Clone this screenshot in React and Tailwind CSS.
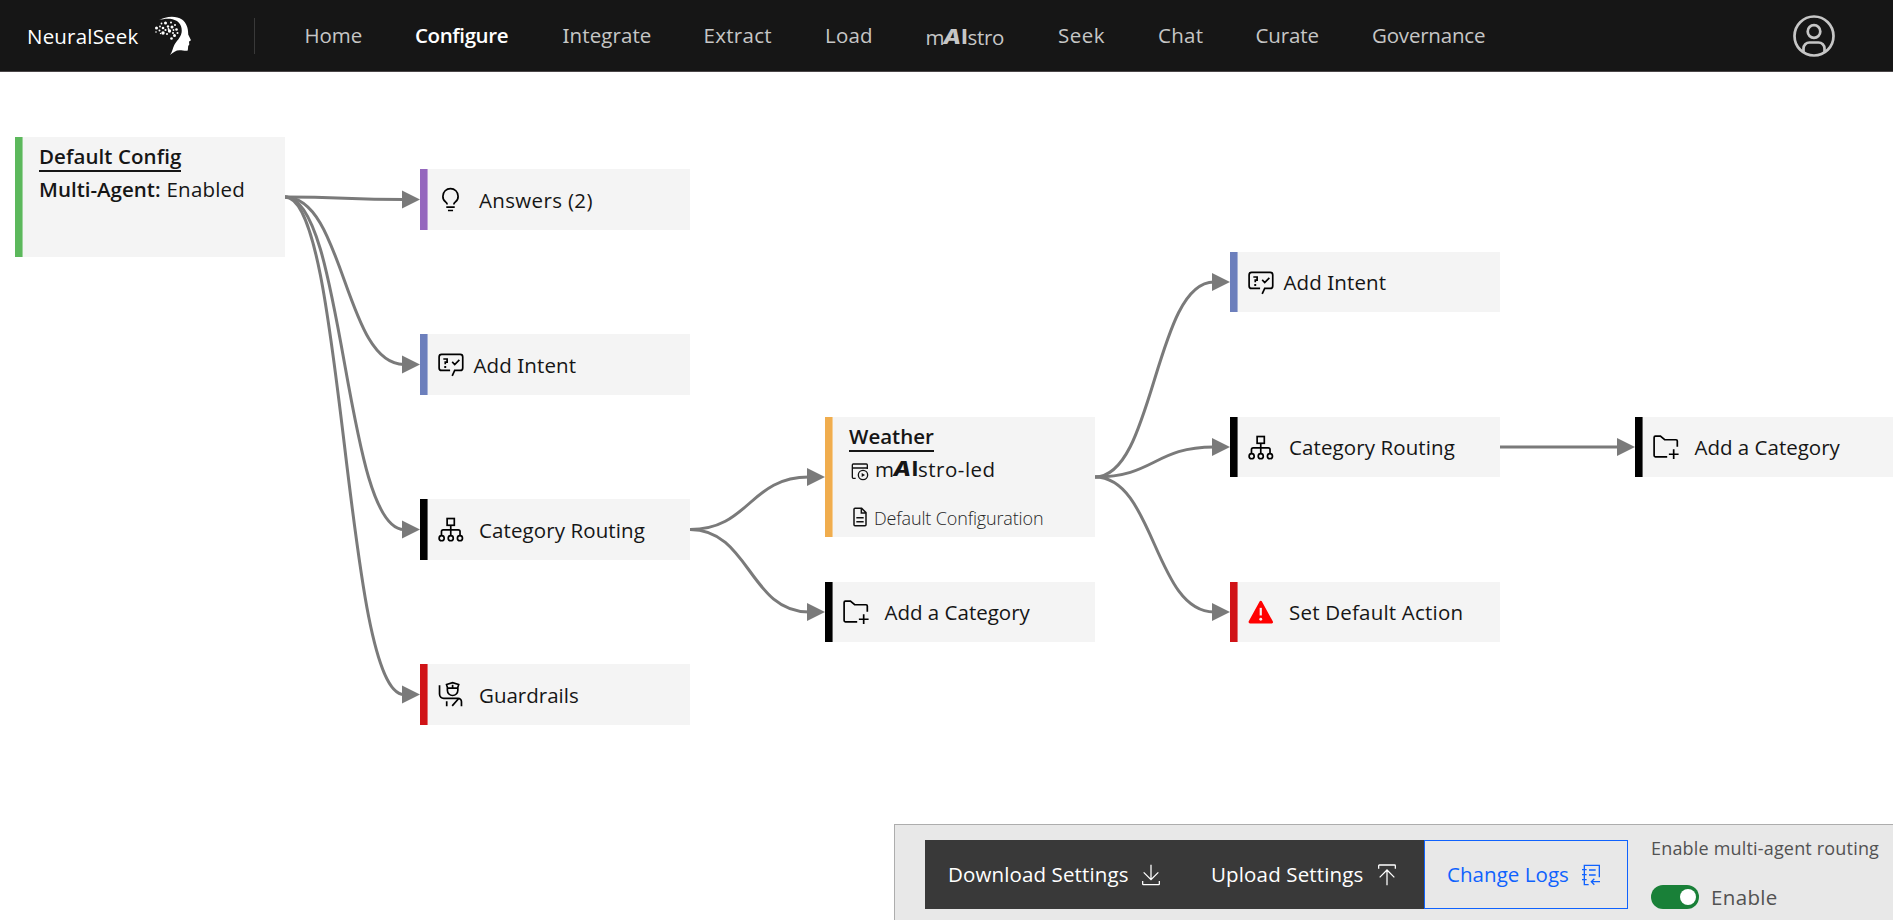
import React from "react";

const Serif = ({ children }) => <span className="font-['Noto_Sans',sans-serif]">{children}</span>;

const Ai = () => (
  <span className="inline-flex font-['Inter',sans-serif]">
    <span className="inline-block w-[19px] origin-left scale-x-115 font-extrabold italic tracking-normal">A</span>
    <span className="inline-block w-[6px] text-center font-extrabold tracking-normal">I</span>
  </span>
);

/* ---------- icons ---------- */

const Icon = ({ children }) => (
  <svg viewBox="0 0 32 32" className="size-[27px] shrink-0" fill="none" stroke="#000" strokeWidth="2">
    {children}
  </svg>
);

const BulbIcon = () => (
  <Icon>
    <path
      fill="#000"
      stroke="none"
      d="M11 24H21V26H11zM13 28H19V30H13zM16 2A10 10 0 0 0 6 12a9.19 9.19 0 0 0 3.46 7.62c1 .93 1.54 1.46 1.54 2.38h2c0-1.84-1.11-2.87-2.19-3.86A7.2 7.2 0 0 1 8 12a8 8 0 0 1 16 0 7.2 7.2 0 0 1-2.82 6.14c-1.07 1-2.18 2-2.18 3.86h2c0-.92.53-1.45 1.54-2.39A9.18 9.18 0 0 0 26 12 10 10 0 0 0 16 2z"
    />
  </Icon>
);

const IntentIcon = () => (
  <Icon>
    <path d="M15.500 23H5.500a3 3 0 0 1-3-3V7a3 3 0 0 1 3-3h22a3 3 0 0 1 3 3V20a3 3 0 0 1-3 3H21L18 29.500" />
    <path d="M7.500 9.500h4.500v3.700H9.800v2.500M18 13l3 3 5.500-5.500" />
    <rect x="8.600" y="17.800" width="2.300" height="2.300" fill="#000" stroke="none" />
  </Icon>
);

const TreeIcon = () => (
  <Icon>
    <rect x="12" y="3" width="8.500" height="8" />
    <path d="M16.300 11v12M5.300 23v-4.500a2 2 0 0 1 2-2h18a2 2 0 0 1 2 2V23" />
    <circle cx="5.500" cy="26.300" r="3" />
    <circle cx="16.300" cy="26.300" r="3" />
    <circle cx="27.200" cy="26.300" r="3" />
  </Icon>
);

const GuardIcon = () => (
  <Icon>
    <path d="M3 5v10.500a5 5 0 0 0 5 5H25a4 4 0 0 1 4 4V30M11.500 24v6M18 29.500l7.500-8.500" />
    <path d="M11.300 4.200 18.500 2l7.200 2.200-1 3.300v3.500a6.200 6.200 0 0 1-12.400 0V7.500zM12 8.500h13" />
    <path d="M18.500 4.500v4" />
  </Icon>
);

const FolderAddIcon = () => (
  <Icon>
    <path d="M18 27H4a1.500 1.500 0 0 1-1.500-1.500V4A1.500 1.500 0 0 1 4 2.500H10l5 4.300H28.500a1.500 1.500 0 0 1 1.500 1.500V15M25.700 18v11.500M20 24h11.500" />
  </Icon>
);

const WarningIcon = () => (
  <Icon>
    <path d="M16.300 4 29 27.300H3.600z" fill="#f00" stroke="#f00" strokeWidth="3.500" strokeLinejoin="round" />
    <path d="M16.300 10.500v9" stroke="#f4f4f4" strokeWidth="2.600" />
    <circle cx="16.300" cy="24" r="1.700" fill="#f4f4f4" stroke="none" />
  </Icon>
);

const MaistroIcon = () => (
  <svg viewBox="0 0 54 54" className="ml-[2px] mt-[6px] size-[18px]" fill="none" stroke="#111" strokeWidth="4">
    <path d="M14 46H7a3 3 0 0 1-3-3V6a3 3 0 0 1 3-3H46a3 3 0 0 1 3 3V18M4 15H49" />
    <circle cx="36" cy="36" r="14" />
    <path d="M32 30v12l10-6z" fill="#111" stroke="none" />
  </svg>
);

const DocIcon = () => (
  <svg viewBox="0 0 48 60" className="-mt-[2px] h-[20px] w-[16px]" fill="none" stroke="#111" strokeWidth="4.500">
    <path d="M29 4H9a3 3 0 0 0-3 3V53a3 3 0 0 0 3 3H39a3 3 0 0 0 3-3V17zM28 4V18H42M13 32H35M13 44H35" />
  </svg>
);

const DownloadIcon = () => (
  <svg viewBox="0 0 54 66" className="h-[22px] w-[18px]" fill="none" stroke="#fff" strokeWidth="3.800">
    <path d="M27 2V46M5 25 27 47 49 25M2 51v9a2 2 0 0 0 2 2H50a2 2 0 0 0 2-2V51" />
  </svg>
);

const UploadIcon = () => (
  <svg viewBox="0 0 54 66" className="h-[22px] w-[18px]" fill="none" stroke="#fff" strokeWidth="3.800">
    <path d="M27 64V18M5 40 27 18 49 40M2 14V5a2 2 0 0 1 2-2H50a2 2 0 0 1 2 2v9" />
  </svg>
);

const LogIcon = () => (
  <svg viewBox="0 0 54 66" className="h-[22px] w-[18px]" fill="none" stroke="#0f62fe" strokeWidth="4">
    <path d="M20 62H7V4H52V40M0 17H14M0 32H14M0 47H14M21 18H41M21 33H41M54 53H29M37 44l-9 9 9 9" />
  </svg>
);

const UserIcon = () => (
  <svg viewBox="0 0 42 42" className="size-[42px]" fill="none" stroke="#c6c6c6" strokeWidth="2.700">
    <circle cx="21" cy="21" r="19.500" />
    <circle cx="21" cy="16.500" r="6.300" />
    <path d="M10.500 37V33.500a6 6 0 0 1 6-6h9a6 6 0 0 1 6 6V37" />
  </svg>
);

const DOTS = [
  [1.5, 12, 1.5], [1, 16, 0.8], [4.5, 14.5, 1], [5, 10.5, 0.9], [6.5, 7.5, 0.9], [8, 12, 1.3],
  [8, 17, 1.7], [10.5, 7, 1.5], [10.5, 14, 1.1], [12, 18, 1], [13, 10.5, 1.2], [14.5, 15, 1.7],
  [16, 6.5, 1], [17, 11, 1.5], [18, 17, 1], [19.5, 19.5, 1.5], [20, 9, 1], [21.5, 13.5, 1.3],
  [22.5, 17, 1], [16.5, 22.5, 1.3], [18.5, 14, 0.9], [5.5, 17.5, 0.7], [13.5, 13, 0.9],
];

const HeadLogo = () => (
  <svg viewBox="0 0 38 40" className="h-10 w-[38px]" fill="#fff">
    <path d="M4 4.300C11 0 21 -.6 27 3.500 31.500 7 33.300 12 33.200 18.500L35.900 24C36 25 34.300 25.300 34 25.800L34.300 28.500 33.200 30 32.800 34.300C32.300 35.400 27.500 34.300 24.500 34.200 21 34.200 18 36.300 15 39 17.500 35.500 17.600 32.500 19.300 29 21.500 25 25.800 21.500 26.600 16.500 27.500 9.500 24 4.700 17.500 3.200 13 2.400 8 2.800 4 4.300Z" />
    {DOTS.map(([x, y, r], i) => (
      <circle key={i} cx={x} cy={y} r={r} />
    ))}
  </svg>
);

/* ---------- header ---------- */

const Header = () => (
  <header className="flex h-[72px] items-center border-b border-[#4a4648] bg-[#161616] text-[20.5px] leading-6 text-[#c6c6c6]">
    <div className="flex w-[254px] items-center pl-[27px]">
      <span className="w-[128px] tracking-[0.2px] text-white">NeuralSeek</span>
      <HeadLogo />
    </div>
    <div className="h-9 w-px bg-[#393939]" />
    <nav className="flex flex-1 pl-[49.500px]">
      <a className="w-[110.500px] tracking-[-0.1px]">Home</a>
      <a className="w-[147.500px] font-semibold tracking-[-0.4px] text-white">Configure</a>
      <a className="w-[141px] tracking-[0.1px]"><Serif>I</Serif>ntegrate</a>
      <a className="w-[121.500px] tracking-[0.3px]">Extract</a>
      <a className="w-[100.500px] tracking-[0.2px]">Load</a>
      <a className="flex w-[132.500px] pt-[2px] tracking-[-0.3px]">
        <span className="inline-block w-[17px] tracking-[-1px]">m</span><Ai /><span>stro</span>
      </a>
      <a className="w-[100px] tracking-[0.5px]">Seek</a>
      <a className="w-[97.500px] tracking-[0.3px]">Chat</a>
      <a className="w-[116.500px] tracking-[-0.1px]">Curate</a>
      <a className="tracking-[-0.2px]">Governance</a>
    </nav>
    <div className="pr-[58px]">
      <UserIcon />
    </div>
  </header>
);

/* ---------- diagram ---------- */

const EDGES = [
  [285, 197, 420, 199.5], [285, 197, 420, 364.5], [285, 197, 420, 529.5], [285, 197, 420, 694.5],
  [690, 529.5, 825, 477], [690, 529.5, 825, 612],
  [1095, 477, 1230, 282], [1095, 477, 1230, 447], [1095, 477, 1230, 612],
  [1500, 447, 1635, 447],
];

const Edges = () => (
  <svg viewBox="0 72 1893 848" className="absolute inset-0 h-[848px] w-[1893px]">
    {EDGES.map(([x1, y1, x2, y2], i) => {
      const end = x2 - 16;
      const mid = (x1 + end) / 2;
      return (
        <g key={i}>
          <path d={`M${x1} ${y1}C${mid} ${y1} ${mid} ${y2} ${end} ${y2}`} fill="none" stroke="#7a7a7a" strokeWidth="3" />
          <path d={`M${x2 - 18} ${y2 - 9}L${x2} ${y2}L${x2 - 18} ${y2 + 9}Z`} fill="#7a7a7a" />
        </g>
      );
    })}
  </svg>
);

const Card = ({ className, bar, children }) => (
  <div className={`absolute flex w-[270px] bg-[#f4f4f4] ${className}`}>
    <div className={`w-2 shrink-0 border-r border-white/40 ${bar}`} />
    {children}
  </div>
);

const Node = ({ pos, bar, icon, gap = "ml-[15px]", text = "tracking-[0.1px]", children }) => (
  <Card className={`items-stretch ${pos}`} bar={bar}>
    <div className="flex items-center pl-[9px]">
      {icon}
      <span className={`whitespace-nowrap ${gap} ${text}`}>{children}</span>
    </div>
  </Card>
);

const INTENT = <><Serif>I</Serif>ntent</>;

const Diagram = () => (
  <main className="relative h-[848px] overflow-hidden bg-white text-[20.5px] leading-7 text-[#161616]">
    <Edges />
    <Card className="left-[15px] top-[65px] h-[120px]" bar="bg-[#5cb85c]">
      <div className="flex flex-col items-start pl-4 pt-[5px]">
        <span className="border-b-2 border-[#161616] font-semibold tracking-[0.08px]">Default Config</span>
        <div className="mt-[3px] flex gap-[6px]">
          <span className="font-semibold">Multi-Agent:</span>
          <span className="tracking-[0.2px]">Enabled</span>
        </div>
      </div>
    </Card>
    <Node pos="left-[420px] top-[97px] h-[61px]" bar="bg-[#9467bd]" icon={<BulbIcon />} gap="ml-[15px]" text="pt-px tracking-[0.35px]">Answers (2)</Node>
    <Node pos="left-[420px] top-[262px] h-[61px]" bar="bg-[#6c7fbc]" icon={<IntentIcon />} gap="ml-[9.500px]" text="pt-px tracking-[0.1px]">Add {INTENT}</Node>
    <Node pos="left-[420px] top-[427px] h-[61px]" bar="bg-black" icon={<TreeIcon />} text="pt-px tracking-[0.1px]">Category Routing</Node>
    <Node pos="left-[420px] top-[592px] h-[61px]" bar="bg-[#d01317]" icon={<GuardIcon />} text="pt-px tracking-[0px]">Guardrails</Node>

    <Card className="left-[825px] top-[345px] h-[120px]" bar="bg-[#f0ad4e]">
      <div className="flex flex-col items-start pl-4 pt-[5px]">
        <span className="border-b-2 border-[#161616] font-semibold tracking-[0px]">Weather</span>
        <div className="mt-[3px] flex items-center">
          <MaistroIcon />
          <span className="ml-[6px] flex tracking-[0.5px]">
            <span className="inline-block w-[18px] tracking-[-1px]">m</span><Ai /><span>stro-led</span>
          </span>
        </div>
        <div className="mt-[21px] flex items-center pl-[3px] text-[18px] font-light tracking-[-0.15px] text-[#262626]">
          <DocIcon />
          <span className="ml-[6px]">Default Configuration</span>
        </div>
      </div>
    </Card>
    <Node pos="left-[825px] top-[510px] h-[60px]" bar="bg-black" icon={<FolderAddIcon />} gap="ml-[15.500px]" text="tracking-[0px]">Add a Category</Node>

    <Node pos="left-[1230px] top-[180px] h-[60px]" bar="bg-[#6c7fbc]" icon={<IntentIcon />} gap="ml-[9.500px]">Add {INTENT}</Node>
    <Node pos="left-[1230px] top-[345px] h-[60px]" bar="bg-black" icon={<TreeIcon />}>Category Routing</Node>
    <Node pos="left-[1230px] top-[510px] h-[60px]" bar="bg-[#d01317]" icon={<WarningIcon />} text="tracking-[0.2px]">Set Default Action</Node>
    <Node pos="left-[1635px] top-[345px] h-[60px]" bar="bg-black" icon={<FolderAddIcon />} gap="ml-[15.500px]" text="tracking-[0px]">Add a Category</Node>

    <section className="absolute bottom-0 right-0 flex h-[96px] w-[999px] border-l border-t border-[#adadad] bg-[#e8e8e8] pl-[30px] pt-[15px] text-white">
      <button className="flex h-[69px] w-[263px] items-center bg-[#393939] pl-[23px]">
        <span className="-mt-[2px] w-[194px] text-left tracking-[0.13px]">Download Settings</span>
        <DownloadIcon />
      </button>
      <button className="flex h-[69px] w-[236px] items-center bg-[#393939] pl-[23px]">
        <span className="-mt-[2px] w-[167px] text-left tracking-[0.15px]">Upload Settings</span>
        <UploadIcon />
      </button>
      <button className="flex h-[69px] w-[204px] items-center border border-[#0f62fe] pl-[22px] text-[#0f62fe]">
        <span className="-mt-[2px] w-[135px] text-left tracking-[0.05px]">Change Logs</span>
        <LogIcon />
      </button>
      <div className="-mt-[6px] ml-[23px] text-[#525252]">
        <div className="whitespace-nowrap text-[18px] tracking-[0.18px]">Enable multi-agent routing</div>
        <div className="mt-[21px] flex items-center">
          <div className="flex h-6 w-12 items-center justify-end rounded-full bg-[#198038] pr-[3px]">
            <div className="size-4 rounded-full bg-white" />
          </div>
          <span className="ml-3 tracking-[0.35px]">Enable</span>
        </div>
      </div>
    </section>
  </main>
);

export default function App() {
  return (
    <div className="w-full overflow-hidden bg-white font-['Open_Sans',sans-serif]">
      <Header />
      <Diagram />
    </div>
  );
}
